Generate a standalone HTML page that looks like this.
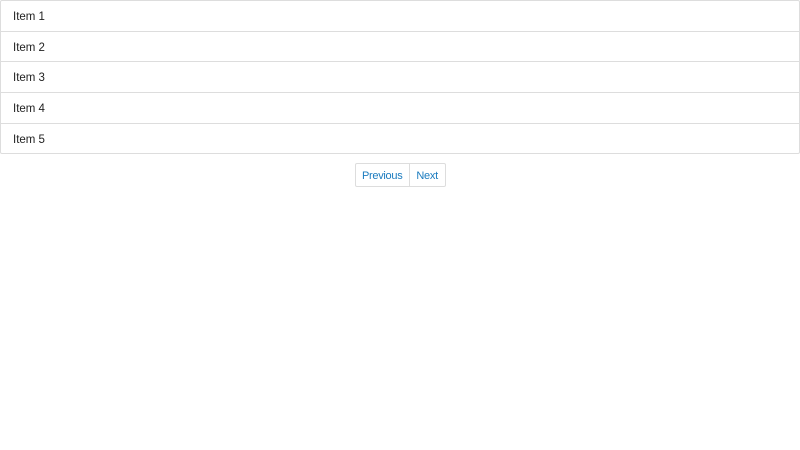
<!DOCTYPE html><html><head><style>
body{margin:0;font-family:"Liberation Sans",sans-serif;font-size:11.5px;color:#222;background:#fff}
.list{border:1px solid #ddd;border-radius:2px;width:798px}
.it{height:29.7px;line-height:32px;padding-left:12px;border-top:1px solid #ddd}
.it:first-child{border-top:none}
.pg{position:absolute;left:355px;top:163px;display:flex;border:1px solid #ddd;border-radius:2px;height:22px;line-height:24px;color:#1a7bbf;font-size:11px;letter-spacing:-0.3px}
.pg span{padding:0 7px 0 6px}
.pg span+span{border-left:1px solid #ddd}
</style></head><body>
<div class="list"><div class="it">Item 1</div><div class="it">Item 2</div><div class="it">Item 3</div><div class="it">Item 4</div><div class="it">Item 5</div></div>
<div class="pg"><span>Previous</span><span>Next</span></div>
</body></html>
